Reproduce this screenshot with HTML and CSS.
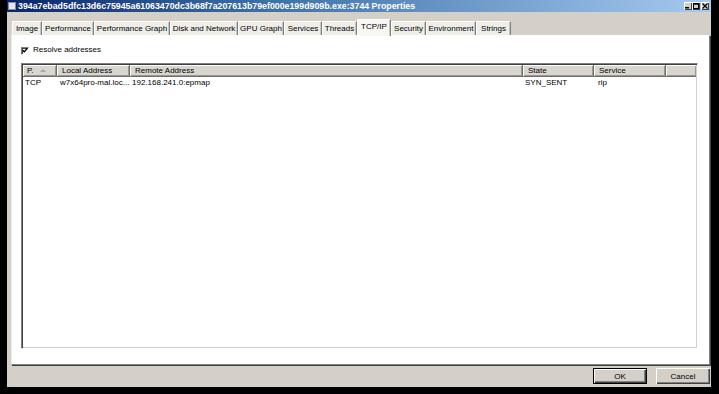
FILE: index.html
```html
<!DOCTYPE html>
<html>
<head>
<meta charset="utf-8">
<link rel="stylesheet" href="styles.css">
</head>
<body>
<div class="window">
  <div class="titlebar">
    <div class="app-icon"></div>
    <div class="title">394a7ebad5dfc13d6c75945a61063470dc3b68f7a207613b79ef000e199d909b.exe:3744 Properties</div>
    <div class="caption-buttons">
      <div class="cap-btn"><svg width="8" height="8" viewBox="0 0 8 8"><rect x="1" y="5" width="4" height="1.5" fill="#000"/></svg></div>
      <div class="cap-btn"><svg width="8" height="8" viewBox="0 0 8 8"><rect x="1.5" y="1.5" width="5" height="5" fill="none" stroke="#000" stroke-width="1"/><rect x="1.5" y="1.5" width="5" height="1.2" fill="#000"/></svg></div>
      <div class="cap-btn close"><svg width="8" height="8" viewBox="0 0 8 8"><path d="M1.5 1.5L6.5 6.5M6.5 1.5L1.5 6.5" stroke="#000" stroke-width="1.2"/></svg></div>
    </div>
  </div>
  <div class="tabs">
    <div class="tab">Image</div>
    <div class="tab">Performance</div>
    <div class="tab">Performance Graph</div>
    <div class="tab">Disk and Network</div>
    <div class="tab">GPU Graph</div>
    <div class="tab">Services</div>
    <div class="tab">Threads</div>
    <div class="tab active">TCP/IP</div>
    <div class="tab">Security</div>
    <div class="tab">Environment</div>
    <div class="tab">Strings</div>
  </div>
  <div class="panel">
    <label class="check-row">
      <span class="checkbox"><svg width="7" height="7" viewBox="0 0 7 7"><path d="M0.8 3.2L2.6 5L6.2 1.2" fill="none" stroke="#000" stroke-width="1.4"/></svg></span>
      <span class="check-label">Resolve addresses</span>
    </label>
    <div class="listview">
      <div class="lv-header">
        <div class="hcell">P.<span class="sort-arrow"></span></div>
        <div class="hcell">Local Address</div>
        <div class="hcell">Remote Address</div>
        <div class="hcell">State</div>
        <div class="hcell">Service</div>
        <div class="hcell filler"></div>
      </div>
      <div class="lv-row">
        <div class="cell c-proto">TCP</div>
        <div class="cell c-local">w7x64pro-mal.loc...</div>
        <div class="cell c-remote">192.168.241.0:epmap</div>
        <div class="cell c-state">SYN_SENT</div>
        <div class="cell c-service">rip</div>
        <div class="cell"></div>
      </div>
    </div>
  </div>
  <div class="buttonbar">
    <button class="btn default">OK</button>
    <button class="btn">Cancel</button>
  </div>
</div>
</body>
</html>
```

FILE: styles.css
```css
html, body {
  margin: 0;
  padding: 0;
}
body {
  background: #000;
  width: 719px;
  height: 394px;
  overflow: hidden;
  font-family: "Liberation Sans", Arial, sans-serif;
  font-size: 8px;
  color: #000;
}
.window {
  margin-left: 7px;
  width: 704px;
  height: 387px;
  background: #d4d0c8;
  display: flex;
  flex-direction: column;
}
.titlebar {
  height: 12px;
  flex: none;
  background: linear-gradient(to right, #0a246a 0%, #3a6ea5 35%, #a6caf0 100%);
  display: flex;
  align-items: center;
  overflow: hidden;
}
.app-icon {
  width: 8px;
  height: 8px;
  margin-left: 1px;
  background: #e8e8e8;
  border: 1px solid #7a8aa8;
  box-sizing: border-box;
  flex: none;
}
.title {
  margin-left: 2px;
  color: #fff;
  font-weight: bold;
  font-size: 8.8px;
  line-height: 11px;
  white-space: nowrap;
}
.caption-buttons {
  margin-left: auto;
  display: flex;
  margin-right: 2px;
  align-self: flex-start;
  margin-top: 2px;
}
.cap-btn {
  width: 8px;
  height: 8px;
  background: #d4d0c8;
  box-shadow: inset 1px 1px 0 #fff, inset -1px -1px 0 #404040;
  display: flex;
}
.cap-btn.close {
  margin-left: 1px;
}
.tabs {
  flex: none;
  display: flex;
  align-items: flex-end;
  height: 16px;
  margin-top: 7px;
  padding-left: 5px;
  position: relative;
  z-index: 1;
}
.tab {
  box-sizing: border-box;
  height: 14px;
  background: #efede8;
  border-top: 1px solid #fff;
  border-left: 1px solid #fff;
  border-right: 1px solid #808080;
  box-shadow: inset -1px 0 0 #c8c5bc;
  text-align: center;
  line-height: 13px;
  white-space: nowrap;
  overflow: hidden;
}
.tab:nth-child(1) { width: 30px; }
.tab:nth-child(2) { width: 52px; }
.tab:nth-child(3) { width: 76px; }
.tab:nth-child(4) { width: 68px; }
.tab:nth-child(5) { width: 46px; }
.tab:nth-child(6) { width: 38px; }
.tab:nth-child(7) { width: 35px; }
.tab:nth-child(8) { width: 34px; }
.tab:nth-child(9) { width: 35px; }
.tab:nth-child(10) { width: 50px; }
.tab:nth-child(11) { width: 35px; }
.tab.active {
  height: 17px;
  margin-bottom: -1px;
  background: #f7f6f3;
  line-height: 14px;
  padding-bottom: 3px;
}
.panel {
  flex: none;
  box-sizing: border-box;
  margin-left: 4px;
  width: 699px;
  height: 330px;
  background: #fff;
  border-top: 1px solid #fff;
  border-left: 1px solid #eceae4;
  border-right: 1px solid #808080;
  border-bottom: 1px solid #808080;
  box-shadow: 1px 1px 0 #404040;
  padding: 9px 10px 15px 9px;
  display: flex;
  flex-direction: column;
}
.check-row {
  display: flex;
  align-items: center;
  height: 10px;
  flex: none;
}
.checkbox {
  box-sizing: border-box;
  width: 8px;
  height: 8px;
  border-top: 1px solid #808080;
  border-left: 1px solid #808080;
  border-right: 1px solid #fff;
  border-bottom: 1px solid #fff;
  box-shadow: inset 1px 1px 0 #404040;
  background: #fff;
  display: flex;
  align-items: center;
  justify-content: center;
  margin-top: 1px;
}
.checkbox svg {
  display: block;
}
.check-label {
  margin-left: 4px;
  line-height: 10px;
}
.listview {
  margin-top: 8px;
  flex: 1;
  box-sizing: border-box;
  width: 677px;
  background: #fff;
  border-top: 1px solid #808080;
  border-left: 1px solid #808080;
  border-right: 1px solid #fff;
  border-bottom: 1px solid #fff;
  box-shadow: inset 1px 1px 0 #404040, inset -1px -1px 0 #d4d0c8;
  padding: 1px;
}
.lv-header,
.lv-row {
  display: grid;
  grid-template-columns: 34px 73px 393px 71px 72px 1fr;
}
.lv-header {
  height: 12px;
}
.hcell {
  box-sizing: border-box;
  background: #d9d6cf;
  border-right: 1px solid #6e6e6e;
  border-bottom: 1px solid #6e6e6e;
  box-shadow: inset 1px 1px 0 #fff, inset -1px -1px 0 #9a9890;
  padding-left: 5px;
  line-height: 11px;
  white-space: nowrap;
  overflow: hidden;
  display: flex;
  align-items: center;
}
.hcell:first-child {
  padding-left: 4px;
}
.hcell.filler {
  border-right: none;
}
.sort-arrow {
  width: 0;
  height: 0;
  margin-left: 6px;
  border-left: 3px solid transparent;
  border-right: 3px solid transparent;
  border-bottom: 3px solid #a8a8a8;
}
.lv-row {
  height: 11px;
  line-height: 11px;
}
.cell {
  white-space: nowrap;
  overflow: hidden;
  padding-left: 2px;
}
.c-local { padding-left: 3px; }
.c-service { padding-left: 4px; }
.buttonbar {
  flex: 1;
  display: flex;
  justify-content: flex-end;
  align-items: flex-start;
  padding-top: 3px;
  padding-right: 1px;
  gap: 9px;
}
.btn {
  box-sizing: border-box;
  width: 54px;
  height: 16px;
  margin: 0;
  padding: 0;
  font-family: "Liberation Sans", Arial, sans-serif;
  font-size: 8px;
  color: #000;
  background: #d4d0c8;
  border: none;
  border-radius: 0;
  box-shadow: inset 1px 1px 0 #fff, inset -1px -1px 0 #404040, inset -2px -2px 0 #808080;
}
.btn.default {
  border: 1px solid #000;
}
```
